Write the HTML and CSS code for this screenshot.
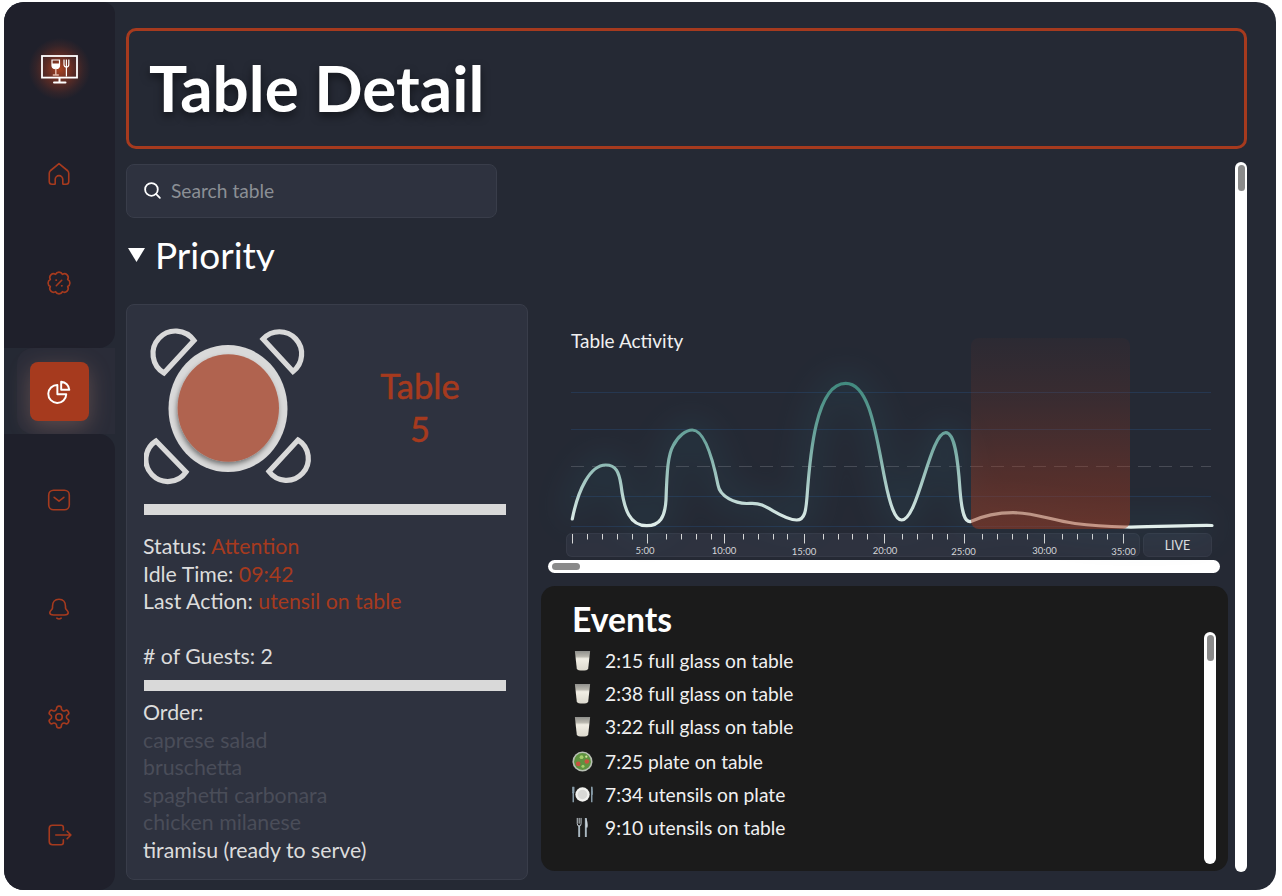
FILE: index.html
```html
<!doctype html>
<html lang="en">
  <head>
    <meta charset="UTF-8" />
    <meta name="viewport" content="width=device-width, initial-scale=1.0" />
    <title>Table Detail</title>
    <link rel="stylesheet" href="styles.css">
  </head>
  <body>
    <div class="app">
      <nav class="sidebar">
        <div class="side-block side-top">
          <div class="logo">
            <svg class="logo-icon" viewBox="0 0 38 32" width="38" height="32" fill="none">
              <rect x="1" y="1" width="35" height="21.6" stroke="#fff" stroke-width="1.8" />
              <path d="M18.500 23v4" stroke="#fff" stroke-width="2" />
              <path d="M13 27.600h11.500" stroke="#fff" stroke-width="2" stroke-linecap="round" />
              <path d="M11 5h7.500v5.500q0 3-3.700 3.200q-3.800-.2-3.800-3.200z" stroke="#fff" stroke-width="1.2" />
              <path d="M11 8.500h7.500v2q0 3.200-3.700 3.200q-3.800 0-3.800-3.200z" fill="#fff" />
              <path d="M14.800 13.700v5.500M11.800 20h6" stroke="#e2b8a8" stroke-width="1.5" />
              <path d="M23 4.500v5q0 2.500 2.400 2.500q2.400 0 2.400-2.500v-5M25.400 4.500v17" stroke="#fff" stroke-width="1.2" />
            </svg>
          </div>
          <a class="nav-item" href="#">
            <svg class="icon" viewBox="0 0 24 24"><path d="M12 2.500L20 9Q21 10 21 11.500V19Q21 21.500 18.500 21.500H16Q15.500 21.500 15.500 21V17A3.500 3.500 0 0 0 8.500 17V21Q8.500 21.500 8 21.500H5.500Q3 21.500 3 19V11.500Q3 10 4 9Z" /></svg>
          </a>
          <a class="nav-item" href="#">
            <svg class="icon" viewBox="0 0 24 24"><path d="M20 15.200A3.500 3.500 0 0 1 15.200 20A3.500 3.500 0 0 1 8.800 20A3.500 3.500 0 0 1 4 15.200A3.500 3.500 0 0 1 4 8.800A3.500 3.500 0 0 1 8.800 4A3.500 3.500 0 0 1 15.200 4A3.500 3.500 0 0 1 20 8.800A3.500 3.500 0 0 1 20 15.200Z" /><path d="M9.500 14.500L14.500 9.500M9.200 9.400h.4M14.400 14.600h.4" /></svg>
          </a>
        </div>
        <div class="side-active">
          <a class="nav-button" href="#">
            <svg class="icon icon-white" viewBox="0 0 24 24"><path d="M10.500 5.500A8.300 8.300 0 1 0 18.700 14L10.500 14Z" /><path d="M14 2.500A8 8 0 0 1 21.500 10H14Z" /></svg>
          </a>
        </div>
        <div class="side-block side-bottom">
          <a class="nav-item" href="#">
            <svg class="icon" viewBox="0 0 24 24"><rect x="2.500" y="3" width="19" height="18" rx="4.500" /><path d="M7.500 9.500L12 13L16.500 9.500" /></svg>
          </a>
          <a class="nav-item" href="#">
            <svg class="icon" viewBox="0 0 24 24"><path d="M12 3C8 3 6 6 6 9.500V11C6 12.500 3.500 13.500 3.500 15.500C3.500 17 5 17.500 7 17.500H17C19 17.500 20.500 17 20.500 15.500C20.500 13.500 18 12.500 18 11V9.500C18 6 16 3 12 3Z" /><path d="M10 20.500Q12 22 14 20.500" /></svg>
          </a>
          <a class="nav-item" href="#">
            <svg class="icon" viewBox="0 0 24 24"><path d="M12.220 2h-.44a2 2 0 0 0-2 2v.18a2 2 0 0 1-1 1.730l-.43.25a2 2 0 0 1-2 0l-.15-.08a2 2 0 0 0-2.730.73l-.22.38a2 2 0 0 0 .73 2.730l.15.1a2 2 0 0 1 1 1.720v.51a2 2 0 0 1-1 1.740l-.15.09a2 2 0 0 0-.73 2.730l.22.38a2 2 0 0 0 2.730.73l.15-.08a2 2 0 0 1 2 0l.43.25a2 2 0 0 1 1 1.730V20a2 2 0 0 0 2 2h.44a2 2 0 0 0 2-2v-.18a2 2 0 0 1 1-1.730l.43-.25a2 2 0 0 1 2 0l.15.08a2 2 0 0 0 2.730-.73l.22-.39a2 2 0 0 0-.73-2.730l-.15-.08a2 2 0 0 1-1-1.740v-.5a2 2 0 0 1 1-1.740l.15-.09a2 2 0 0 0 .73-2.730l-.22-.38a2 2 0 0 0-2.730-.73l-.15.08a2 2 0 0 1-2 0l-.43-.25a2 2 0 0 1-1-1.730V4a2 2 0 0 0-2-2z" /><circle cx="12" cy="12" r="3" /></svg>
          </a>
          <a class="nav-item nav-logout" href="#">
            <svg class="icon" viewBox="0 0 24 24"><path d="M16 7.500V5Q16 3 14 3H6Q3 3 3 6V18Q3 21 6 21H14Q16 21 16 19V16.500" /><path d="M9 12H23M19.500 8.500L23 12L19.500 15.500" /></svg>
          </a>
        </div>
      </nav>

      <main class="main">
        <header class="page-header">
          <h1>Table Detail</h1>
        </header>

        <div class="content">
          <div class="scroll-body">
            <div class="search">
              <svg class="search-icon" viewBox="0 0 18 18"><circle cx="8" cy="8" r="6" /><path d="M12.500 12.500L16 16" /></svg>
              <span>Search table</span>
            </div>

            <div class="section-head">
              <span class="triangle"></span>
              <h2>Priority</h2>
            </div>

            <div class="columns">
              <section class="card">
                <div class="table-top">
                  <svg class="table-art" viewBox="144 322 170 164" width="170" height="164">
                    <defs>
                      <filter id="plate-shadow" x="-20%" y="-20%" width="140%" height="140%">
                        <feDropShadow dx="-1" dy="3" stdDeviation="2.500" flood-color="#000" flood-opacity=".45" />
                      </filter>
                      <linearGradient id="glass-grad" x1="0" y1="0" x2="0" y2="1">
                        <stop offset="0" stop-color="#8f8f8b" />
                        <stop offset=".28" stop-color="#b9b7ae" />
                        <stop offset=".4" stop-color="#f1eee4" />
                        <stop offset="1" stop-color="#dcd9ce" />
                      </linearGradient>
                    </defs>
                    <g class="chair">
                      <path d="M194 339.500L164 372A22.600 22.600 0 1 1 194 339.500Z" />
                      <path d="M263 338L293 370.500A22.200 22.200 0 1 0 263 338Z" />
                      <path d="M156 440L186 471A22 22 0 1 1 156 440Z" />
                      <path d="M298 439L269 470.500A21.800 21.800 0 1 0 298 439Z" />
                    </g>
                    <ellipse cx="228" cy="407.500" rx="59.500" ry="63.500" fill="#d9d9d9" />
                    <ellipse cx="228.300" cy="407" rx="50.700" ry="53.800" fill="#b06450" filter="url(#plate-shadow)" />
                  </svg>
                  <div class="table-name">Table<br />5</div>
                </div>

                <div class="rule"></div>

                <div class="info">
                  <p>Status: <span class="accent">Attention</span></p>
                  <p>Idle Time: <span class="accent">09:42</span></p>
                  <p>Last Action: <span class="accent">utensil on table</span></p>
                  <p class="spaced"># of Guests: 2</p>
                </div>

                <div class="rule rule-second"></div>

                <div class="info">
                  <p>Order:</p>
                  <p class="served">caprese salad</p>
                  <p class="served">bruschetta</p>
                  <p class="served">spaghetti carbonara</p>
                  <p class="served">chicken milanese</p>
                  <p>tiramisu (ready to serve)</p>
                </div>
              </section>

              <div class="right-col">
                <section class="activity">
                  <h3>Table Activity</h3>
                  <div class="chart">
                    <svg class="chart-svg" viewBox="541 352 687 181" width="687" height="181" fill="none">
                      <defs>
                        <linearGradient id="curve-grad" gradientUnits="userSpaceOnUse" x1="0" y1="383" x2="0" y2="528">
                          <stop offset="0" stop-color="#428a7f" />
                          <stop offset=".4" stop-color="#6fa69f" />
                          <stop offset="1" stop-color="#e4f0ed" />
                        </linearGradient>
                        <filter id="curve-glow" x="-10%" y="-40%" width="120%" height="180%">
                          <feGaussianBlur stdDeviation="16" />
                        </filter>
                        <path id="curve" d="M572.300 519C578 490 590 465 605.700 465C616 465 619 472 621 485C624 510 630 525.700 646.700 525.700C660 525.700 665 517 666 500C667 470 668 455 673 446C678 436 686 430 692.300 430C704 430 712 455 718 485C720 497 735 503 746.700 503.500C752 503.500 756 502.500 762 505C772 509 785 520 796.700 520C805 520 806 510 807 497C810 455 816 383.300 845.700 383.300C870 383.300 876 435 885 480C890 505 895 520 901.700 520C918 520 930 432.700 945.700 432.700C955 432.700 958 460 960 490C962 515 965 521.700 970 521.700C985 515 1000 512.700 1013 512.700C1035 512.700 1050 520 1075 523.500C1095 526 1105 526.500 1125 527C1150 527.500 1190 525 1212 525.500" />
                      </defs>
                      <path class="grid-line" d="M571 392.500H1211M571 429.500H1211M571 496.500H1211M571 526.500H1211" />
                      <path class="grid-dash" d="M571 466.500H1211" />
                      <use href="#curve" stroke="#2f6f80" stroke-width="16" opacity=".22" filter="url(#curve-glow)" />
                      <use href="#curve" stroke="url(#curve-grad)" stroke-width="3.200" stroke-linecap="round" />
                    </svg>
                    <div class="highlight"></div>
                  </div>
                  <div class="timeline-row">
                    <svg class="timeline" viewBox="566 533 574 24" width="574" height="24">
                      <path class="tick" d="M587.500 534V539.500M602.500 534V539.500M617.500 534V539.500M632.500 534V539.500M666.500 534V539.500M681.500 534V539.500M696.500 534V539.500M711.500 534V539.500M743.500 534V539.500M758.500 534V539.500M773.500 534V539.500M787.500 534V539.500M823.500 534V539.500M838.500 534V539.500M852.500 534V539.500M867.500 534V539.500M902.500 534V539.500M917.500 534V539.500M932.500 534V539.500M947.500 534V539.500M982.500 534V539.500M997.500 534V539.500M1012.500 534V539.500M1027.500 534V539.500M1062.500 534V539.500M1077.500 534V539.500M1092.500 534V539.500M1107.500 534V539.500" />
                      <path class="tick" d="M572.500 534V543.500M647.500 534V543.500M724.500 534V543.500M804.500 534V543.500M884.500 534V543.500M964.500 534V543.500M1044.500 534V543.500M1123.500 534V543.500" />
                      <text x="645" y="553.500">5:00</text>
                      <text x="724" y="553.500">10:00</text>
                      <text x="804" y="554.500">15:00</text>
                      <text x="885" y="553.500">20:00</text>
                      <text x="963.500" y="554.500">25:00</text>
                      <text x="1044.500" y="553.500">30:00</text>
                      <text x="1123.500" y="554.500">35:00</text>
                    </svg>
                    <button class="live">LIVE</button>
                  </div>
                  <div class="hscroll"><span class="hthumb"></span></div>
                </section>

                <section class="events">
                  <div class="events-list">
                    <h3>Events</h3>
                    <ul>
                      <li>
                        <svg class="emoji" viewBox="0 0 22 22"><path d="M3 1h16l-2 18.500q-.2 1.500-2 1.700q-4 .4-8 0q-1.800-.2-2-1.700z" fill="url(#glass-grad)" /></svg>
                        <span>2:15 full glass on table</span>
                      </li>
                      <li>
                        <svg class="emoji" viewBox="0 0 22 22"><path d="M3 1h16l-2 18.500q-.2 1.500-2 1.700q-4 .4-8 0q-1.800-.2-2-1.700z" fill="url(#glass-grad)" /></svg>
                        <span>2:38 full glass on table</span>
                      </li>
                      <li>
                        <svg class="emoji" viewBox="0 0 22 22"><path d="M3 1h16l-2 18.500q-.2 1.500-2 1.700q-4 .4-8 0q-1.800-.2-2-1.700z" fill="url(#glass-grad)" /></svg>
                        <span>3:22 full glass on table</span>
                      </li>
                      <li class="tall">
                        <svg class="emoji" viewBox="0 0 22 22"><circle cx="11" cy="11" r="10.500" fill="#b9c0b4" /><circle cx="11" cy="11" r="8.800" fill="#5f9240" /><circle cx="6.500" cy="13.500" r="2.400" fill="#c9533f" /><circle cx="15.500" cy="11" r="2.400" fill="#c9533f" /><circle cx="10" cy="6.500" r="2" fill="#a6cf6c" /><circle cx="11.500" cy="16" r="1.600" fill="#a6cf6c" /><circle cx="15" cy="6" r="1.200" fill="#d5e79c" /></svg>
                        <span>7:25 plate on table</span>
                      </li>
                      <li>
                        <svg class="emoji" viewBox="0 0 22 22"><circle cx="11" cy="11" r="7.500" fill="#f1f1ee" /><circle cx="11" cy="11" r="5" fill="#d9d9d6" /><path d="M1.300 3v16M20.700 3v16" stroke="#8ba0ad" stroke-width="1.500" /><path d="M.4 3v5q0 2 1 2M2.200 3v5q0 2-1 2M20.700 3q1.200 4 .8 8h-.8" stroke="#8ba0ad" stroke-width=".8" fill="none" /></svg>
                        <span>7:34 utensils on plate</span>
                      </li>
                      <li>
                        <svg class="emoji" viewBox="0 0 22 22"><path d="M7.500 9v12M14.500 1v20" stroke="#a9b7c0" stroke-width="2" /><path d="M5.500 1v6q0 2.500 2 2.500t2-2.500v-6M7.500 1v6" stroke="#c9d2d8" stroke-width="1" fill="none" /><path d="M14.500 1q2.500 4 1.800 10h-1.800z" fill="#c9d2d8" /></svg>
                        <span>9:10 utensils on table</span>
                      </li>
                    </ul>
                  </div>
                  <div class="vscroll vscroll-inner"><span class="vthumb"></span></div>
                </section>
              </div>
            </div>
          </div>
          <div class="vscroll vscroll-main"><span class="vthumb"></span></div>
        </div>
      </main>
    </div>
  </body>
</html>
```

FILE: styles.css
```css
:root {
  --accent: #a63a1e;
  --bg: #252934;
  --side: #1f202b;
  --panel: #2e323f;
  --panel-line: #393d4a;
  --text: #dcdcdc;
  font-family: "Lato", "Liberation Sans", sans-serif;
}

* {
  box-sizing: border-box;
}

body {
  margin: 0;
  background: #fff;
}

h1,
h2,
h3,
p,
ul {
  margin: 0;
  padding: 0;
}

.app {
  display: flex;
  width: 1272px;
  height: 888px;
  margin: 2px 0 0 4px;
  border-radius: 20px;
  overflow: hidden;
  background: var(--bg);
}

/* sidebar */

.sidebar {
  flex: 0 0 111px;
  display: flex;
  flex-direction: column;
}

.side-block {
  background: var(--side);
}

.side-top {
  height: 346px;
  border-radius: 0 12px 16px 0;
}

.side-bottom {
  flex: 1;
  padding-top: 12px;
  border-radius: 0 16px 16px 0;
}

.logo {
  display: flex;
  align-items: center;
  justify-content: center;
  height: 118px;
  padding: 20px 0 0;
  background: radial-gradient(circle at 55.500px 67px, rgba(205, 75, 30, 0.8) 0, rgba(166, 58, 30, 0.45) 14px, rgba(166, 58, 30, 0.14) 24px, rgba(166, 58, 30, 0) 31px);
}

.nav-item {
  display: flex;
  align-items: center;
  justify-content: center;
  height: 108.500px;
  padding-right: 1px;
}

.nav-logout {
  margin-top: 9px;
}

.icon {
  width: 26px;
  height: 26px;
  fill: none;
  stroke: var(--accent);
  stroke-width: 1.500;
  stroke-linecap: round;
  stroke-linejoin: round;
}

.icon-white {
  stroke: #fff;
  stroke-width: 1.800;
}

.side-active {
  display: flex;
  align-items: center;
  height: 86px;
  margin-left: 13px;
  padding: 1px 0 0 13px;
  border-radius: 16px 0 0 16px;
  background: #2a2c38;
}

.nav-button {
  display: flex;
  align-items: center;
  justify-content: center;
  width: 59px;
  height: 59px;
  padding-right: 1px;
  border-radius: 8px;
  background: var(--accent);
  box-shadow: 0 6px 22px rgba(215, 150, 125, 0.3);
}

/* main */

.main {
  flex: 1;
  display: flex;
  flex-direction: column;
  padding: 26px 29px 10px 11px;
  min-width: 0;
}

.page-header {
  flex: 0 0 121px;
  display: flex;
  align-items: center;
  padding: 0 0 3px 20px;
  border: 3px solid var(--accent);
  border-radius: 10px;
}

.page-header h1 {
  font-size: 63.800px;
  font-weight: 700;
  color: #fff;
  text-shadow: 0 4px 8px rgba(0, 0, 0, 0.5);
}

.content {
  flex: 1;
  display: flex;
  gap: 7px;
  margin-top: 13px;
  min-height: 0;
}

.scroll-body {
  flex: 1;
  min-width: 0;
  padding-top: 2px;
}

.search {
  display: flex;
  align-items: center;
  gap: 9px;
  width: 371px;
  height: 54px;
  padding: 0 0 2px 16px;
  border: 1px solid var(--panel-line);
  border-radius: 8px;
  background: var(--panel);
  color: #8b8f95;
  font-size: 19.200px;
}

.search-icon {
  width: 19px;
  height: 19px;
  fill: none;
  stroke: #fff;
  stroke-width: 1.700;
  stroke-linecap: round;
}

.section-head {
  display: flex;
  align-items: flex-start;
  gap: 10px;
  height: 32px;
  margin-top: 21px;
  margin-left: 2px;
  overflow: hidden;
}

.triangle {
  width: 17px;
  height: 14px;
  margin-top: 9px;
  background: #fff;
  clip-path: polygon(0 0, 100% 0, 50% 100%);
}

.section-head h2 {
  font-size: 37px;
  font-weight: 400;
  line-height: 32px;
  color: #fff;
}

.columns {
  display: grid;
  grid-template-columns: 402px 687px;
  gap: 13px;
  margin-top: 33px;
}

/* table card */

.card {
  height: 576px;
  padding: 17px 21px 0 17px;
  border: 1px solid var(--panel-line);
  border-radius: 8px;
  background: var(--panel);
  color: var(--text);
}

.table-top {
  display: flex;
  align-items: center;
  height: 165px;
}

.chair {
  fill: none;
  stroke: #d9d9d9;
  stroke-width: 5.200;
}

.table-name {
  flex: 1;
  padding: 4px 0 0 20px;
  text-align: center;
  font-size: 34.500px;
  line-height: 43px;
  color: var(--accent);
  -webkit-text-stroke: 0.5px var(--accent);
}

.rule {
  width: 362px;
  height: 11px;
  margin-top: 17px;
  background: #d9d9d9;
}

.rule-second {
  margin-top: 9px;
  margin-left: -0.500px;
}

.info {
  margin: 18px 0 0 -1px;
  font-size: 21.300px;
  line-height: 27.500px;
}

.rule-second + .info {
  margin-top: 8.500px;
}

.spaced {
  margin-top: 27.500px;
}

.accent {
  color: var(--accent);
}

.served {
  color: #4a4d59;
}

/* activity chart */

.right-col {
  display: flex;
  flex-direction: column;
}

.activity {
  height: 282px;
  padding-top: 26px;
}

.activity h3 {
  padding-left: 30px;
  font-size: 19px;
  font-weight: 400;
  line-height: 22px;
  color: #f0f0f0;
}

.chart {
  position: relative;
  height: 181px;
}

.chart-svg {
  display: block;
  overflow: visible;
}

.grid-line {
  stroke: #263750;
  stroke-width: 1;
}

.grid-dash {
  stroke: #484b55;
  stroke-width: 1;
  stroke-dasharray: 13 8;
}

.highlight {
  position: absolute;
  left: 430px;
  top: -14px;
  width: 159px;
  height: 191px;
  border-radius: 8px;
  background: linear-gradient(180deg, rgba(166, 58, 30, 0.05), rgba(166, 58, 30, 0.16) 33%, rgba(166, 58, 30, 0.5));
}

.timeline-row {
  display: flex;
  gap: 3px;
  margin-left: 25px;
}

.timeline {
  display: block;
  border-radius: 6px;
  background: var(--panel);
  box-shadow: inset 0 0 0 1px #363a47;
}

.tick {
  fill: none;
  stroke: #d8d8d8;
  stroke-width: 1;
}

.timeline text {
  fill: #d5d6d9;
  font-size: 9.500px;
  text-anchor: middle;
}

.live {
  width: 69px;
  height: 24px;
  padding: 0;
  border: 1px solid #363a47;
  border-radius: 6px;
  background: var(--panel);
  color: #e4e4e4;
  font-family: inherit;
  font-size: 12.500px;
}

.hscroll {
  width: 672px;
  height: 13px;
  margin: 3px 0 0 7px;
  padding: 3px 4px;
  border-radius: 7px;
  background: #fff;
}

.hthumb {
  display: block;
  width: 28px;
  height: 7px;
  border-radius: 4px;
  background: #8a8a8a;
}

/* events */

.events {
  display: flex;
  height: 285px;
  padding: 15px 12px 7px 31px;
  border-radius: 14px;
  background: #1b1b1b;
  color: #f0f0f0;
}

.events-list {
  flex: 1;
}

.events h3 {
  font-size: 33.700px;
  font-weight: 700;
  line-height: 37px;
  color: #fff;
}

.events ul {
  margin-top: 5.500px;
  list-style: none;
  font-size: 19.200px;
}

.events li {
  display: flex;
  align-items: center;
  gap: 12px;
  height: 33px;
}

.events li.tall {
  height: 34px;
  margin-top: 1.500px;
}

.emoji {
  flex: 0 0 21px;
  width: 21px;
  height: 21px;
}

.vscroll {
  flex: 0 0 12px;
  width: 12px;
  padding: 3px;
  border-radius: 6px;
  background: #fff;
}

.vscroll-main {
  height: 710px;
}

.vscroll-inner {
  margin-top: 31px;
}

.vthumb {
  display: block;
  width: 7px;
  height: 26px;
  border-radius: 4px;
  background: #8a8a8a;
}
```
